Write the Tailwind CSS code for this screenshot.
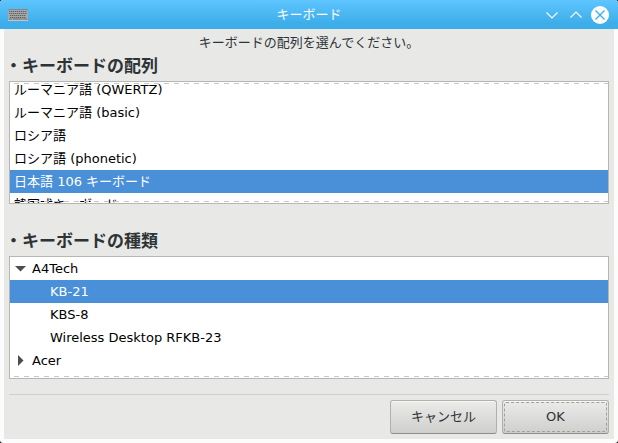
<!DOCTYPE html>
<html lang="ja" class="bg-[#200808]">
<head>
<meta charset="utf-8">
<meta name="viewport" content="width=device-width, initial-scale=1">
<title>キーボード</title>
<script src="https://cdn.jsdelivr.net/npm/@tailwindcss/browser@4"></script>
</head>
<body class="flex min-h-screen flex-col overflow-hidden rounded-[3px] bg-[#fcfcfc] font-['DejaVu_Sans','Noto_Sans_CJK_JP',sans-serif] text-[13px] leading-[23px] text-black">
  <header class="grid h-[29px] shrink-0 grid-cols-[1fr_auto_1fr] items-center bg-linear-to-b from-[#5ec5ff] to-[#3daee9] to-80% px-2 text-[#fcfcfc]">
    <svg class="h-3 w-5" viewBox="0 0 20 12" aria-hidden="true">
      <rect width="20" height="12" rx="1" fill="#a5a7a8"/>
      <rect y="0" width="20" height="1" fill="#7d8890"/>
      <path d="M1 2.5H19M1 4.5H19M2 6.5H18M2 8.5H18" stroke="#606365" stroke-dasharray="1.4 .6"/>
      <path d="M1 10H4M5 10H14M15 10H19" stroke="#707375"/>
      <path d="M0 11.5H20" stroke="#c5c5c5"/>
    </svg>
    <h1>キーボード</h1>
    <div class="flex items-center justify-end pr-px">
      <button class="flex size-6 items-center justify-center" aria-label="最小化">
        <svg class="size-[18px]" viewBox="0 0 18 18" fill="none" stroke="currentColor" stroke-width="1.2"><path d="M3.5 6.5 9 12l5.500-5.500"/></svg>
      </button>
      <button class="flex size-6 items-center justify-center" aria-label="最大化">
        <svg class="size-[18px]" viewBox="0 0 18 18" fill="none" stroke="currentColor" stroke-width="1.2"><path d="M3.500 11.500 9 6l5.500 5.500"/></svg>
      </button>
      <button class="ml-[3px] flex size-[18px] items-center justify-center" aria-label="閉じる">
        <svg class="size-[18px]" viewBox="0 0 18 18" fill="none"><circle cx="9" cy="9" r="9" fill="#fcfcfc"/><path d="m4.500 4.500 9 9m0-9-9 9" stroke="#3daee9" stroke-width="1.300"/></svg>
      </button>
    </div>
  </header>

  <main class="mx-1 mb-1 flex grow flex-col bg-[#e8e8e6] px-[5px] pt-0.5 text-[#2e3436]">
    <p class="text-center">キーボードの配列を選んでください。</p>

    <h2 id="layout" class="-ml-1 h-[27px] text-[17px] leading-6 font-bold">・キーボードの配列</h2>
    <div role="radiogroup" aria-labelledby="layout" class="relative h-[123px] overflow-hidden border border-[#b6b6b3] bg-white text-black">
      <div class="-mt-1">
        <label class="block px-1 has-checked:bg-[#4a90d9] has-checked:text-white"><input type="radio" name="layout" class="sr-only">ルーマニア語 (QWERTZ)</label>
        <label class="block px-1 has-checked:bg-[#4a90d9] has-checked:text-white"><input type="radio" name="layout" class="sr-only">ルーマニア語 (basic)</label>
        <label class="block px-1 has-checked:bg-[#4a90d9] has-checked:text-white"><input type="radio" name="layout" class="sr-only">ロシア語</label>
        <label class="block px-1 has-checked:bg-[#4a90d9] has-checked:text-white"><input type="radio" name="layout" class="sr-only">ロシア語 (phonetic)</label>
        <label class="block px-1 has-checked:bg-[#4a90d9] has-checked:text-white"><input type="radio" name="layout" class="sr-only" checked>日本語 106 キーボード</label>
        <label class="block px-1 has-checked:bg-[#4a90d9] has-checked:text-white"><input type="radio" name="layout" class="sr-only">韓国式キーボード</label>
      </div>
      <div class="pointer-events-none absolute inset-x-0 top-px h-px bg-[repeating-linear-gradient(90deg,transparent_0_4px,#c8c8c8_4px_9px,transparent_9px_10px)]"></div>
      <div class="pointer-events-none absolute inset-x-0 bottom-px h-px bg-[repeating-linear-gradient(90deg,transparent_0_4px,#c8c8c8_4px_9px,transparent_9px_10px)]"></div>
    </div>

    <h2 id="model" class="mt-[25px] -ml-1 h-[27px] text-[17px] leading-6 font-bold">・キーボードの種類</h2>
    <div role="radiogroup" aria-labelledby="model" class="relative h-[123px] overflow-hidden border border-[#b6b6b3] bg-white text-black">
      <details open class="group">
        <summary class="flex list-none items-center pl-1">
          <svg class="mr-[5px] size-[13px] -rotate-90 group-open:rotate-0" viewBox="0 0 13 13" aria-hidden="true"><path d="M1 4h11L6.500 9.500z" fill="#4d4d4d"/></svg>A4Tech
        </summary>
        <label class="block pl-10 has-checked:bg-[#4a90d9] has-checked:text-white"><input type="radio" name="model" class="sr-only" checked>KB-21</label>
        <label class="block pl-10 has-checked:bg-[#4a90d9] has-checked:text-white"><input type="radio" name="model" class="sr-only">KBS-8</label>
        <label class="block pl-10 has-checked:bg-[#4a90d9] has-checked:text-white"><input type="radio" name="model" class="sr-only">Wireless Desktop RFKB-23</label>
      </details>
      <details class="group">
        <summary class="flex list-none items-center pl-1">
          <svg class="mr-[5px] size-[13px] -rotate-90 group-open:rotate-0" viewBox="0 0 13 13" aria-hidden="true"><path d="M1 4h11L6.500 9.500z" fill="#4d4d4d"/></svg>Acer
        </summary>
      </details>
      <details class="group">
        <summary class="flex list-none items-center pl-1">
          <svg class="mr-[5px] size-[13px] -rotate-90 group-open:rotate-0" viewBox="0 0 13 13" aria-hidden="true"><path d="M1 4h11L6.500 9.500z" fill="#4d4d4d"/></svg>Advance
        </summary>
      </details>
      <div class="pointer-events-none absolute inset-x-0 bottom-px h-px bg-[repeating-linear-gradient(90deg,transparent_0_4px,#c8c8c8_4px_9px,transparent_9px_10px)]"></div>
    </div>

    <footer class="mt-[15px] flex justify-end gap-[5px] border-t border-[#d0d0ce] pt-[5px] pb-[5px]">
      <button class="h-[34px] w-[107px] rounded-[3px] border border-[#b0b0ad] border-b-[#8e8e8c] bg-linear-to-b from-[#ebebe9] to-[#cfcfcd] pb-0.5 shadow-[inset_0_1px_#f8f8f7]">キャンセル</button>
      <button autofocus class="h-[34px] w-[107px] rounded-[3px] border border-[#b0b0ad] border-b-[#8e8e8c] bg-linear-to-b from-[#ebebe9] to-[#cfcfcd] p-px shadow-[inset_0_1px_#f8f8f7] outline-none"><span class="flex h-full items-center justify-center rounded-[2px] border border-dashed border-[#a0a09e] pb-0.5">OK</span></button>
    </footer>
  </main>
</body>
</html>
